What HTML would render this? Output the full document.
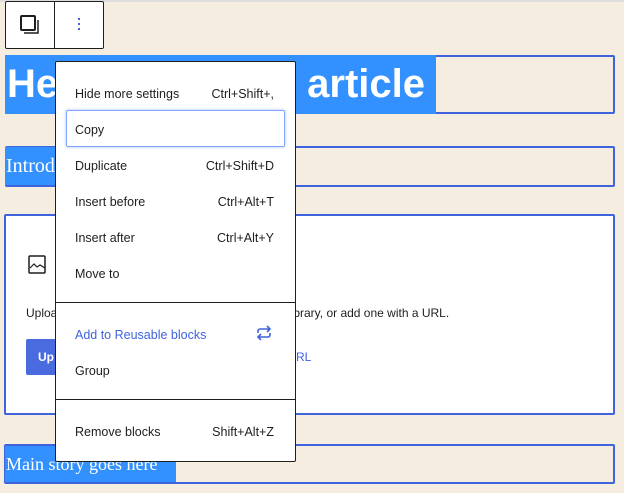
<!DOCTYPE html><html><head><style>
body{margin:0;width:624px;height:493px;background:#f4ede0;position:relative;overflow:hidden;font-family:"Liberation Sans",sans-serif}
.a{position:absolute;box-sizing:border-box}
.blk{border:2px solid #3f63dd;border-radius:2px}
.hl{background:#3390ff;color:#fff}
.mi{position:absolute;left:19px;right:21px;font-size:12.5px;color:#1e1e1e;display:flex;justify-content:space-between}
</style></head><body>
<div class="a" style="left:0;top:0;width:624px;height:2px;background:#ddd"></div>
<div class="a" style="left:5px;top:1px;width:99px;height:48px;background:#fff;border:1px solid #1e1e1e;border-radius:2px"></div>
<div class="a" style="left:54px;top:1px;width:1px;height:48px;background:#1e1e1e"></div>
<svg class="a" style="left:19px;top:14px" width="22" height="22" viewBox="0 0 22 22"><rect x="2" y="2" width="14" height="14" rx="1" fill="none" stroke="#1e1e1e" stroke-width="2"/><path d="M5 19h14V6" fill="none" stroke="#1e1e1e" stroke-width="1.5"/></svg>
<div class="a" style="left:78px;top:18px;width:2px;height:2px;background:#3f63dd;box-shadow:0 5px #3f63dd,0 10px #3f63dd"></div>

<div class="a blk" style="left:5px;top:55px;width:610px;height:59px"></div>
<div class="a hl" style="left:5px;top:55px;width:431px;height:59px;font-size:40px;font-weight:bold;line-height:59px;padding-left:2px">He<span style="margin-left:249px">article</span></div>

<div class="a blk" style="left:5px;top:146px;width:610px;height:41px"></div>
<div class="a hl" style="left:5px;top:147px;width:60px;height:38px;font-family:'Liberation Serif',serif;font-size:20px;line-height:38px;padding-left:1px">Introd</div>

<div class="a blk" style="left:4px;top:214px;width:611px;height:201px;background:#fff"></div>
<svg class="a" style="left:28px;top:255px" width="20" height="20" viewBox="0 0 20 20"><rect x="1" y="1" width="16" height="17" rx="1" fill="none" stroke="#1e1e1e" stroke-width="1.5"/><path d="M2 13l4-4 3 3 3-2 5 3" fill="none" stroke="#1e1e1e" stroke-width="1.2"/></svg>
<div class="a" style="left:26px;top:306px;font-size:12px;color:#1e1e1e">Uploa</div>
<div class="a" style="left:296px;top:306px;font-size:12px;color:#1e1e1e;margin-left:-8px">library, or add one with a URL.</div>
<div class="a" style="left:26px;top:339px;width:30px;height:36px;background:#4a6be0;border-radius:2px;color:#fff;font-size:12px;font-weight:bold;line-height:36px;padding-left:12px">Up</div>
<div class="a" style="left:296px;top:350px;font-size:12px;color:#3f63dd">RL</div>

<div class="a blk" style="left:4px;top:444px;width:611px;height:40px"></div>
<div class="a hl" style="left:5px;top:446px;width:171px;height:36px;font-family:'Liberation Serif',serif;font-size:18px;line-height:36px;padding-left:1px">Main story goes here</div>

<div class="a" style="left:55px;top:61px;width:241px;height:401px;background:#fff;border:1px solid #1e1e1e;border-radius:2px">
<div class="mi" style="top:25px"><span>Hide more settings</span><span>Ctrl+Shift+,</span></div>
<div class="a" style="left:10px;top:48px;width:219px;height:37px;border:1.5px solid #80a6f5;border-radius:2px;box-shadow:0 0 3px #a9c3f7"></div>
<div class="mi" style="top:61px"><span>Copy</span></div>
<div class="mi" style="top:97px"><span>Duplicate</span><span>Ctrl+Shift+D</span></div>
<div class="mi" style="top:133px"><span>Insert before</span><span>Ctrl+Alt+T</span></div>
<div class="mi" style="top:169px"><span>Insert after</span><span>Ctrl+Alt+Y</span></div>
<div class="mi" style="top:205px"><span>Move to</span></div>
<div class="a" style="left:0;top:240px;width:240px;height:1px;background:#1e1e1e"></div>
<div class="mi" style="top:266px;color:#3f63dd"><span>Add to Reusable blocks</span></div>
<svg class="a" style="left:198px;top:261px" width="20" height="20" viewBox="0 0 20 20"><path d="M4 10V8a2 2 0 0 1 2-2h10M13 3l3 3-3 3M16 10v2a2 2 0 0 1-2 2H4M7 17l-3-3 3-3" fill="none" stroke="#3f63dd" stroke-width="1.6"/></svg>
<div class="mi" style="top:302px"><span>Group</span></div>
<div class="a" style="left:0;top:337px;width:240px;height:1px;background:#1e1e1e"></div>
<div class="mi" style="top:363px"><span>Remove blocks</span><span>Shift+Alt+Z</span></div>
</div>
</body></html>
